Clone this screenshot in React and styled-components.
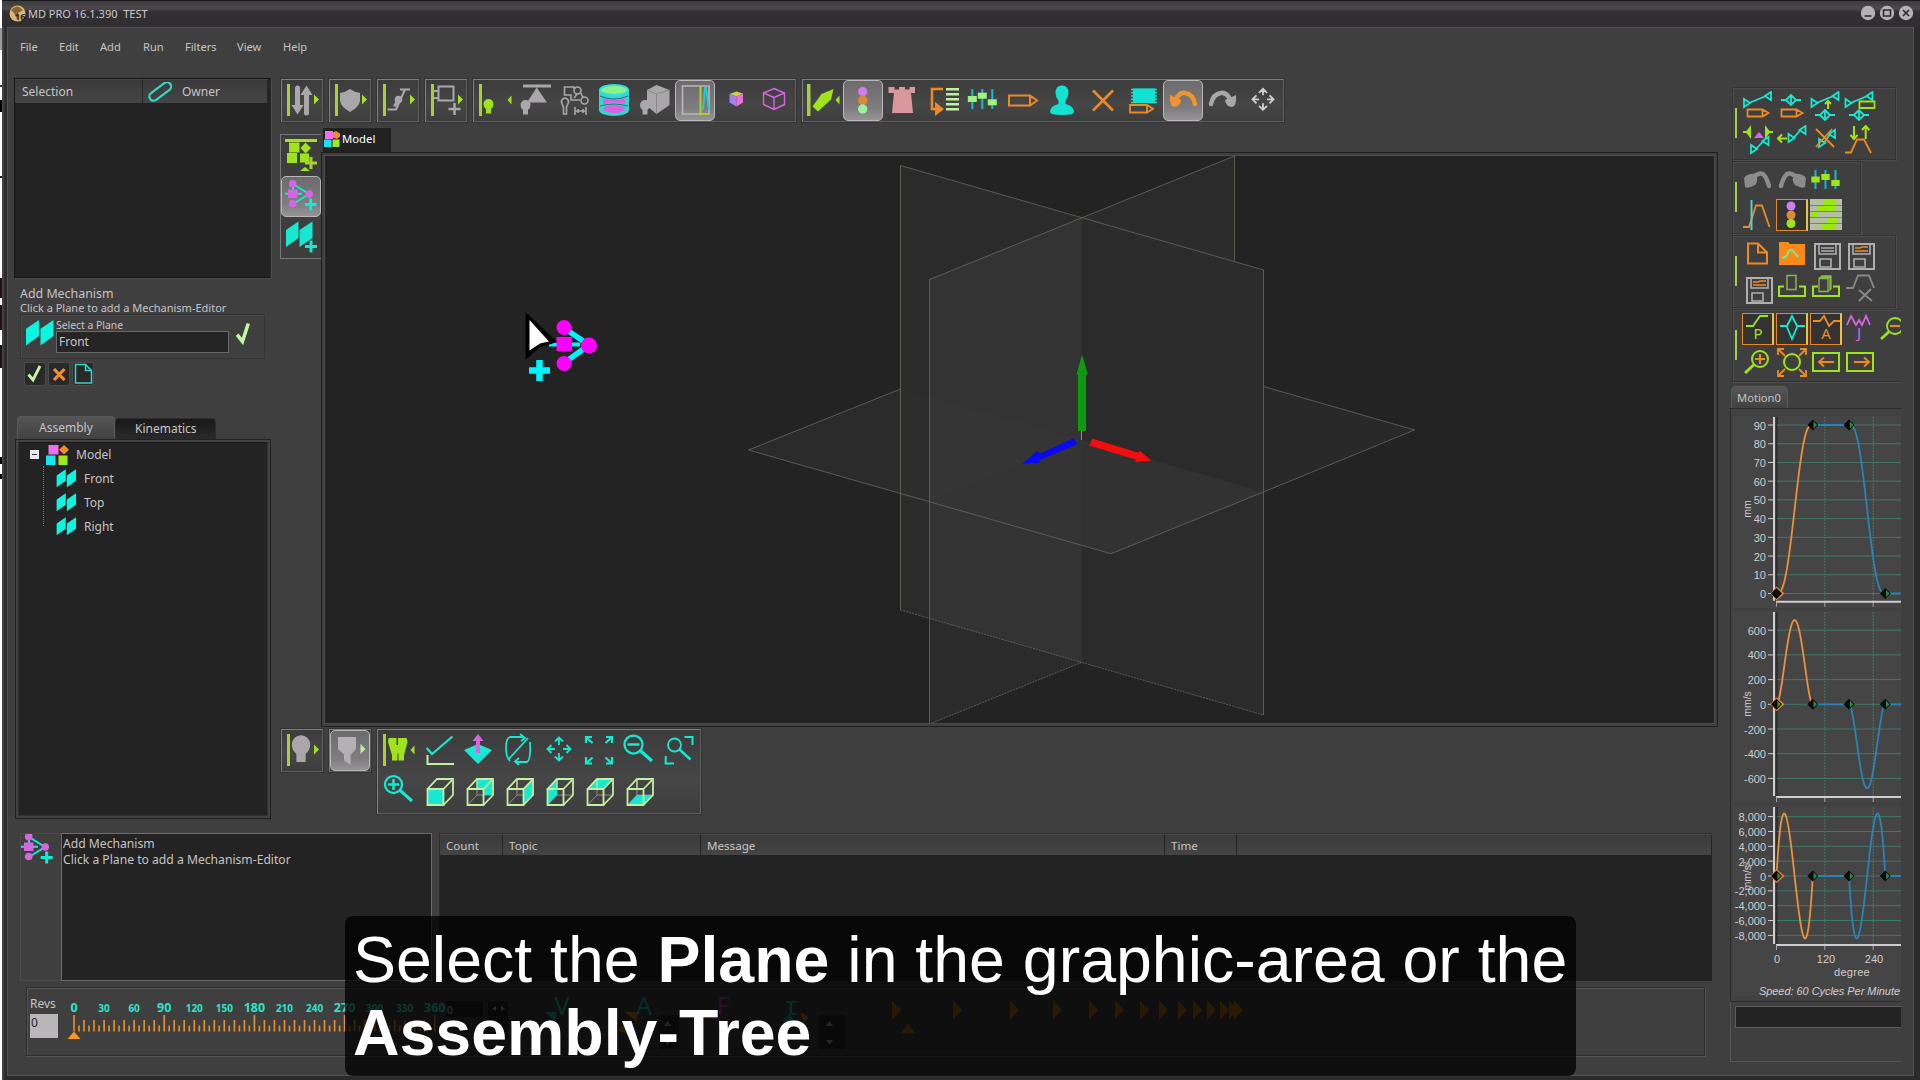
import React from "react";
import styled, { createGlobalStyle, css } from "styled-components";

const C = {
  lime: "#9fe31a",
  bar: "#a6cf3c",
  cyan: "#17e8d2",
  aqua: "#0cf5e0",
  purple: "#d864e4",
  orange: "#ee8a24",
  grey: "#a9a7a9",
  pale: "#c3efa2",
  text: "#c6c4c6",
  panel: "#3f3f3f",
  well: "#232323",
};

const GlobalStyle = createGlobalStyle`
  *, *::before, *::after { box-sizing: border-box; }
  body { margin: 0; background: #2d2c2d; overflow: hidden; }
  svg { display: block; }
`;

/* ---------- window shell ---------- */

const Screen = styled.div`
  position: relative;
  width: 1920px;
  height: 1080px;
  overflow: hidden;
  padding-left: 2px;
  background: linear-gradient(#fff 0 28px, #999 28px 50px, #fff 50px 85px, #333 85px 87px, #fff 87px 100px, #000 100px 112px, #fff 112px 176px, #222 176px 178px, #fff 178px 278px, #211 278px 298px, #fff 298px 305px, #211 305px 330px, #fff 330px 345px, #211 345px 368px, #fff 368px 457px, #000 457px 464px, #fff 464px 474px, #000 474px 479px, #fff 479px);
  font-family: "Noto Sans", "DejaVu Sans", sans-serif;
  font-size: 12px;
  color: ${C.text};
`;

const Window = styled.div`
  height: 1080px;
  padding: 0 6px 4px 5px;
  background: linear-gradient(90deg, #464546 0 1px, #2c2b2c 3px);
`;

const TitleBar = styled.header`
  display: flex;
  align-items: center;
  height: 27px;
  margin: 0 -6px 0 -5px;
  padding: 0 6px 2px 7px;
  border-top: 1px solid #1c1b1c;
  background: linear-gradient(#3d3b3d 0, #4a484a 30%, #312f31 42%, #302e30 100%);
`;

const Title = styled.span`
  margin-left: 2px;
  font-size: 11px;
  white-space: pre;
  color: #cbc9cb;
`;

const WinButtons = styled.div`
  display: flex;
  gap: 3px;
  margin-left: auto;
`;

const Frame = styled.div`
  height: 1049px;
  border: 1px solid #545354;
  background: ${C.panel};
`;

const MenuBar = styled.nav`
  display: flex;
  height: 50px;
  padding-left: 12px;
`;

const MenuItem = styled.span`
  width: ${(p) => p.$w}px;
  height: 38px;
  line-height: 38px;
  font-size: 11.1px;
`;

const Work = styled.div`
  display: flex;
`;

const Main = styled.main`
  width: 1722px;
`;

const Upper = styled.section`
  display: flex;
  height: 755px;
  padding-left: 6px;
`;

/* ---------- left column ---------- */

const LeftCol = styled.aside`
  display: flex;
  flex-direction: column;
  width: 257px;
  margin-right: 9px;
`;

const ListPanel = styled.div`
  height: 200px;
  border: 1px solid #161616;
  border-right-color: #2a2a2a;
  box-shadow: 1px 1px 0 #4b4b4b;
  background: ${C.well};
`;

const HeadRow = styled.div`
  display: flex;
  height: 24px;
  margin-right: 2px;
`;

const HeadCell = styled.div`
  display: flex;
  align-items: center;
  width: ${(p) => p.$w};
  height: 100%;
  padding-left: ${(p) => p.$pad || 6}px;
  gap: 10px;
  font-size: ${(p) => p.$size || 12}px;
  border-right: 1px solid #262626;
  border-top: 1px solid #4b4a4b;
  background: linear-gradient(#3a3a3a, #464546);
`;

const Prompt = styled.div`
  padding: 7px 0 0 6px;
`;

const PromptTitle = styled.div`
  height: 16px;
  line-height: 18px;
  font-size: 12.4px;
`;

const PromptHint = styled.div`
  height: 13px;
  line-height: 14px;
  font-size: 11px;
`;

const PickBox = styled.div`
  display: flex;
  width: 245px;
  height: 45px;
  padding: 4px 0 0 5px;
  border: 1px solid #363536;
  box-shadow: inset 1px 1px 0 #4a494a;
`;

const PickField = styled.div`
  width: 173px;
  margin: 0 6px 0 2px;
`;

const PickLabel = styled.div`
  height: 12px;
  line-height: 12px;
  font-size: 10.4px;
`;

const PickInput = styled.div`
  height: 22px;
  padding-left: 2px;
  line-height: 19px;
  border: 1px solid #6b6a6b;
  background: #262526;
`;

const Actions = styled.div`
  display: flex;
  gap: 4px;
  padding: 4px 0 0 5px;
`;

const ActionButton = styled.div`
  width: 20px;
  height: 22px;
  border-radius: 2px;
  background: #292929;
  box-shadow: 0 0 0 1px #4a4a4a;
`;

const Tabs = styled.div`
  display: flex;
  align-items: flex-end;
  height: 23px;
  margin: 31px 0 0 3px;
`;

const Tab = styled.div`
  width: ${(p) => p.$w}px;
  height: ${(p) => (p.$on ? 23 : 21)}px;
  padding-left: ${(p) => p.$pad}px;
  line-height: ${(p) => (p.$on ? 22 : 20)}px;
  border-radius: 4px 4px 0 0;
  border: 1px solid ${(p) => (p.$on ? "#5a595a" : "#2d2d2d")};
  border-bottom: 0;
  background: ${(p) => (p.$on ? "linear-gradient(#575657, #424142)" : "linear-gradient(#191919, #2a2a2a)")};
`;

const TreeBox = styled.div`
  width: 256px;
  height: 380px;
  padding: 2px;
  margin-left: 1px;
  border: 1px solid #222;
  background: #434243;
`;

const Tree = styled.div`
  height: 374px;
  width: 250px;
  padding: 0 0 0 11px;
  background: ${C.well};
  border: 1px solid #303030;
  border-top-color: #1b1b1b;
`;

const TreeRow = styled.div`
  display: flex;
  align-items: center;
  height: 24px;
  gap: 7px;
`;

const TreeRoot = styled(TreeRow)`
  height: 23px;
`;

const TreeKids = styled.div`
  margin-left: 13px;
  padding-left: 12px;
  height: 60px;
  border-left: 1px dotted #777;
`;

/* ---------- toolbars ---------- */

const Center = styled.section`
  width: 1440px;
`;

const ToolRow = styled.div`
  display: flex;
  gap: 6px;
  height: ${(p) => p.$h}px;
  padding: 1px 0 0 1px;
`;

const bevel = css`
  border: 1px solid #5f5e5f;
  border-top-color: #807f80;
  border-left-color: #807f80;
  box-shadow: 0 0 0 1px #353435;
  background: linear-gradient(#3d3c3d, #474647 60%, #3e3d3e);
`;

const ToolGroup = styled.div`
  display: flex;
  flex-wrap: wrap;
  align-content: flex-start;
  flex: none;
  width: ${(p) => p.$n * 40 + 2 + (p.$slack || 0)}px;
  height: ${(p) => (p.$rows || 1) * 41 + (p.$rows > 1 ? 3 : 2)}px;
  padding-left: ${(p) => p.$lead || 0}px;
  ${bevel}
`;

const ToolButton = styled.div`
  width: 40px;
  height: 41px;
  border-radius: 5px;
  ${(p) =>
    p.$on &&
    css`
      border: 1px solid #b9b8b9;
      background: linear-gradient(#6c6a6c, #7f7d7f 70%, #959395);
      svg { margin: -1px; }
    `}
`;

const Stage = styled.div`
  display: flex;
  height: 600px;
`;

const SideTools = styled.div`
  width: 41px;
  height: 125px;
  margin-top: 6px;
  border: 1px solid #777;
  border-right: 0;
  background: #3f3e3f;
`;

const ViewCol = styled.div`
  width: 1397px;
`;

const ModelTab = styled.div`
  display: flex;
  align-items: center;
  width: 68px;
  height: 24px;
  margin-left: 2px;
  padding: 0 0 3px 1px;
  gap: 2px;
  font-size: 11.3px;
  color: #fff;
  background: #222;
`;

const ViewFrame = styled.div`
  height: 575px;
  padding: 2px;
  border: 1px solid #202020;
  background: #403f40;
`;

const Viewport = styled.div`
  height: 569px;
  border: 1px solid #4d4c4d;
  background: ${C.well};
`;

/* ---------- bottom area ---------- */

const Messages = styled.section`
  display: flex;
  height: 148px;
  padding-left: 12px;
`;

const MsgIcon = styled.div`
  width: 41px;
  border: 1px solid #4c4b4c;
  border-right: 0;
`;

const MsgBox = styled.div`
  width: 371px;
  padding: 2px 0 0 1px;
  border: 1px solid #6d6c6d;
  font-size: 12.150px;
  line-height: 16px;
  background: ${C.well};
`;

const LogTable = styled.div`
  width: 1273px;
  margin-left: 7px;
  border: 1px solid #2d2d2d;
  border-width: 1px 0 0 1px;
  background: ${C.well};
`;

const LogHead = styled.div`
  display: flex;
  height: 21px;
`;

const Timeline = styled.section`
  display: flex;
  width: 1679px;
  height: 69px;
  margin: 6px 0 0 18px;
  padding: 6px 0 0 3px;
  border: 1px solid #2f2e2f;
  box-shadow: inset 1px 1px 0 #555455, 1px 1px 0 #555455;
`;

const Revs = styled.div`
  width: 28px;
  line-height: 20px;
  font-size: 12px;
`;

const RevsField = styled.div`
  height: 24px;
  line-height: 18px;
  padding-left: 1px;
  color: #222;
  background: #b9b7ba;
`;

/* ---------- right dock ---------- */

const Dock = styled.aside`
  width: 171px;
  height: 995px;
  overflow: hidden;
  padding-top: 9px;
`;

const DockGroup = styled.div`
  display: flex;
  width: ${(p) => p.$w}px;
  height: 73px;
  margin: 0 0 1px 2px;
  padding: 3px 0 0 2px;
  border: 1px solid #343334;
  box-shadow: inset 1px 1px 0 #4d4c4d, 1px 1px 0 #4d4c4d;
`;

const Grip = styled.div`
  width: 2px;
  height: 30px;
  margin: 17px 5px 0 0;
  background: ${C.bar};
`;

const DockGrid = styled.div`
  display: grid;
  grid-template-columns: repeat(${(p) => p.$cols}, 32px);
  grid-auto-rows: 32px;
  gap: 2px;
`;

const DockButton = styled.div`
  width: 32px;
  height: 32px;
  ${(p) =>
    p.$on &&
    css`
      border: 1px solid #e8872a;
      border-right: 2px solid #f0c040;
      background: #343334;
      svg { margin: -1px; }
    `}
`;

const MotionTab = styled.div`
  width: 57px;
  height: 22px;
  margin: 4px 0 0 1px;
  padding-left: 5px;
  line-height: 21px;
  font-size: 11.2px;
  border: 1px solid #5a595a;
  border-bottom: 0;
  border-radius: 5px 5px 0 0;
  background: linear-gradient(#565556, #434243);
`;

const ChartPanel = styled.div`
  height: 594px;
  padding-top: 1px;
  border-left: 1px solid #2b2b2b;
  border-top: 1px solid #2b2b2b;
  border-bottom: 1px solid #2b2b2b;
  background: #424142;
`;

const DockFoot = styled.div`
  height: 60px;
  padding: 4px 0 0 4px;
  border-left: 1px solid #565556;
  border-bottom: 1px solid #565556;
`;

const DockField = styled.div`
  height: 22px;
  border: 1px solid #5e5d5e;
  border-right: 0;
  background: #252425;
`;

const Caption = styled.div`
  position: absolute;
  left: 345px;
  top: 916px;
  width: 1231px;
  height: 160px;
  padding: 8px;
  border-radius: 8px;
  background: rgba(0, 0, 0, 0.76);
  color: #fff;
  font-family: "Liberation Sans", Arial, sans-serif;
  font-size: 64.450px;
  line-height: 72.500px;
  white-space: nowrap;
`;

/* ---------- icon drawing helpers ---------- */

const Ico = ({ w = 40, h = 40, vb, children }) => (
  <svg width={w} height={h} viewBox={vb || `0 0 ${w} ${h}`} fill="none">{children}</svg>
);
const L = ({ d, c = C.cyan, w = 2, ...r }) => <path d={d} stroke={c} strokeWidth={w} {...r} />;
const F = ({ d, c = C.cyan, ...r }) => <path d={d} fill={c} {...r} />;
const Bar = () => <rect x="5" y="4" width="3" height="32" fill={C.bar} />;
const Next = ({ c = C.lime }) => <F c={c} d="M32 14.5l5 5-5 5z" />;
const Prev = () => <F c={C.lime} d="M36.5 15.500l-4 4.500 4 4.500z" />;
const Bulb = ({ x, y, c, s = 1 }) => (
  <F c={c} d={`M${x - 5 * s} ${y}a${5 * s} ${5 * s} 0 0 1 ${10 * s} 0q0 ${3 * s}-${2.5 * s} ${5 * s}v${4.5 * s}h-${5 * s}v-${4.5 * s}q-${2.5 * s}-${2 * s}-${2.5 * s}-${5 * s}z`} />
);
const Plus = ({ x, y, r = 6, w = 3, c = C.cyan }) => <L c={c} w={w} d={`M${x - r} ${y}h${2 * r}M${x} ${y - r}v${2 * r}`} />;
const FourWay = ({ x, y, r, c }) => (
  <L c={c} w={1.8} d={[[0, -1], [0, 1], [-1, 0], [1, 0]].map(([a, b]) => {
    const tx = x + a * r, ty = y + b * r, k = 4;
    return `M${x + a * 4} ${y + b * 4}L${tx} ${ty}M${tx - a * k + b * k} ${ty - b * k + a * k}L${tx} ${ty}L${tx - a * k - b * k} ${ty - b * k - a * k}`;
  }).join("")} />
);
const Pencil = ({ x, y, w, h, tip = 7, sw = 2 }) => (
  <L c={C.orange} w={sw} d={`M${x} ${y}h${w}l${tip} ${h / 2}l-${tip} ${h / 2}h-${w}zM${x + w} ${y}v${h}`} />
);
const Mechanism = () => (
  <>
    <L w={2} d="M12 8L28 18L12 28M4 17.700H21M12 8V18" />
    <g fill={C.purple}>
      <circle cx="11.700" cy="7.700" r="3.800" /><circle cx="28.300" cy="18" r="3.700" /><circle cx="11.700" cy="27.500" r="3.800" />
      <rect x="7" y="13.500" width="9.500" height="8.500" />
    </g>
    <Plus x={29.7} y={28.5} />
  </>
);
const Planes = ({ w = 27, h = 26 }) => (
  <svg width={w} height={h} viewBox="0 0 27 26" fill={C.aqua}>
    <path d="M0 9L12.500 0.500V16L0 25zM14 9L26.500 0.500V16L14 25z" />
  </svg>
);
const ModelGlyph = ({ w, h }) => (
  <svg width={w} height={h} viewBox="0 0 23 20">
    <rect x="2.500" y="0" width="10" height="9.500" fill="#ef6df0" />
    <path d="M18 0l5 4.800-5 4.800-5-4.800z" fill="#f58a26" />
    <rect x="0" y="10.500" width="9.500" height="9.500" fill="#17e6f2" />
    <rect x="12.500" y="10.500" width="9" height="9.500" fill="#a0e81c" />
  </svg>
);
const TabGlyph = () => (
  <svg width="16" height="16" viewBox="0 0 16 16">
    <rect x="1" y="0" width="8" height="8" fill="#ef6df0" />
    <path d="M9 1.500l3-1.500 4 2.500v3l-3 2.500-4-1.500z" fill="#f58a26" />
    <rect x="0" y="8.500" width="7.500" height="7.500" fill="#17e6f2" />
    <rect x="8.500" y="8.500" width="7" height="7.500" fill="#a0e81c" />
  </svg>
);
const Sliders = ({ xs, ys, y1, y2, kw }) => (
  <>
    {xs.map((x, i) => (
      <g key={x}>
        <rect x={x - 1} y={y1} width="2" height={y2 - y1} fill="#19b8d0" />
        <rect x={x - kw / 2} y={ys[i] - 3} width={kw} height="6" fill={kw > 8.5 ? "#a0f082" : C.lime} />
      </g>
    ))}
  </>
);
const Dots = ({ x, ys, r }) => (
  <>
    <circle cx={x} cy={ys[0]} r={r} fill="#cf7cf0" />
    <circle cx={x} cy={ys[1]} r={r} fill="#d88a35" />
    <circle cx={x} cy={ys[2]} r={r} fill={r > 4.6 ? "#9cf09a" : C.lime} />
  </>
);
const Undo = ({ c, flip, s = 40 }) => (
  <g transform={flip ? `translate(${s},0) scale(-1,1)` : undefined}>
    <L c={c} w={4.5} strokeLinecap="round" d={s === 40 ? "M13 19Q17 12 22 13Q30 14 32 24" : "M10 14Q16 7 21 9Q25 13 27 21"} />
    <F c={c} d={s === 40 ? "M7 15L18 20Q17 27 11 27Q6 26 7 15z" : "M2 13Q6 8 14 9Q17 16 13 20Q6 24 3 22z"} />
  </g>
);

const CubeFace = ({ face }) => {
  const faces = {
    front: "M9.500 18h16v16h-16z",
    back: "M19 8h16v16h-9.500v-6H19z",
    right: "M25.500 18L35 8V24L25.500 34z",
    left: "M9.500 18L19 8V24L9.500 34z",
    top: "M9.500 18L19 8H35L25.500 18z",
    bottom: "M9.500 34L19 24H35L25.500 34z",
  };
  return (
    <Ico>
      {face !== "front" && <L c="#8b8a8b" w={1} d="M19 24H35M19 8V24L9.500 34" />}
      <F d={faces[face]} />
      <L c={C.pale} w={1.8} d="M9.500 18h16v16h-16zM9.500 18L19 8H35V24L25.500 34M25.500 18L35 8" />
      {face !== "front" && <L c={C.pale} w={1.2} d="M19 8V18" />}
    </Ico>
  );
};

const Lens = ({ x, y, r, tx, ty, sign, c = C.cyan, sc = c, w = 2.5 }) => {
  const a = Math.atan2(ty - y, tx - x);
  return (
    <>
      <circle cx={x} cy={y} r={r} stroke={c} strokeWidth={w * 0.9} />
      <L c={c} w={w * 1.3} d={`M${x + r * Math.cos(a)} ${y + r * Math.sin(a)}L${tx} ${ty}`} />
      {sign && <L c={sc} w={w} d={`M${x - r + 3} ${y}h${2 * r - 6}${sign === "+" ? `M${x} ${y - r + 3}v${2 * r - 6}` : ""}`} />}
    </>
  );
};

/* ---------- toolbar icons ---------- */

const quick = [
  <><Bar /><L c={C.grey} w={5} d="M15.500 8V28M24.500 33V14" strokeLinecap="round" /><F c={C.grey} d="M9.500 25h12l-6 9.500zM18.500 15h12l-6-9.500z" /><Next /></>,
  <><Bar /><F c={C.grey} d="M10 13Q15 12.500 20 9Q25 12.500 30 13V21Q29 27 20 32Q11 27 10 21z" /><Next /></>,
  <><Bar /><L c={C.grey} w={2} d="M9.500 29.500H18L27 9.500M22 9.500H32" /><circle cx="20.500" cy="19.500" r="3.800" fill={C.grey} /><F c={C.grey} d="M15 26l5-9 3 2-5 8z" /><Next /></>,
  <><Bar /><L c={C.grey} w={2} d="M12.500 6.500h15v14h-15zM8 11h5M8 18h5" /><Plus x={28.5} y={29} r={6} w={2.5} c={C.grey} /><Next /></>,
];

const display = [
  [<><rect x="4" y="4" width="3" height="32" fill={C.bar} /><Bulb x={13.5} y={24} c={C.lime} /><Prev /></>],
  [<><F c={C.grey} d="M8 4.500h28v3H8zM21.700 7.500L32 22.500H12z" /><Bulb x={10.5} y={25} c={C.grey} /></>],
  [<><L c={C.grey} w={1.6} d="M19 9V7H9.500V15H16V20H25M7 23.500a3.500 3.500 0 1 1 6 0l-1.500 4v6.500h-3v-6.500zM20 27v8M31 27v8M20 31h11M23 29v4M28 29v4M22 14L19 18M25.500 12.500L28 17.500" /><circle cx="22.500" cy="10.500" r="3.500" stroke={C.grey} strokeWidth="1.600" /><circle cx="29.500" cy="20.500" r="3.500" stroke={C.grey} strokeWidth="1.600" /></>],
  [<><path d="M4 10v20a15 6 0 0 0 30 0V10z" fill="#35d6cf" /><ellipse cx="19" cy="10" rx="14" ry="5" fill="#8cf08c" stroke="#2fe2e2" strokeWidth="2" /><path d="M8 18q11 3 22 0v6q-11 -3-22 0z" fill={C.purple} /><ellipse cx="19" cy="29" rx="11" ry="4" fill={C.purple} /><L c="#235c66" w={0.8} d="M5 16q14 6 28 0M5 26q14 -4 28 0" /></>],
  [<><F c={C.grey} d="M21.500 5L34.500 10V25L21.500 34L12 26V10z" /><L c="#8a898a" w={1} d="M12 10L21.500 14L34.500 10M21.500 14V34" /><Bulb x={10} y={25} c={C.grey} /></>],
  [<><L c="#b9b8b9" w={1.6} d="M7.500 6h26.500v28h-26.500z" /><L c="#b5cc30" w={2} d="M25.500 6v28h9" /><L c="#25cfc9" w={1.8} d="M28 30l2-22h1l3 22" /></>, true],
  [<><F c="#c5d63a" d="M14.500 14l7-2.500 6.500 2-6.500 3z" /><F c="#a77df0" d="M14.500 14l7 2.500v10l-7-4z" /><F c="#e872d8" d="M21.500 16.500l6.500-3v9l-6.500 4z" /></>],
  [<L c={C.purple} w={1.4} d="M19 8.500L29.500 13V24.500L19 29.500L8.500 24.500V13zM8.500 13L19 17.500L29.500 13M19 17.500V29.500" />],
];

const edit = [
  [<><rect x="4" y="4" width="3.500" height="32" fill={C.bar} /><F c={C.lime} d="M9.500 26.500L18.500 14L30.500 9L28 19.500L15 31.500z" /><Prev /></>],
  [<Dots x={19.7} ys={[11.7, 20.3, 29]} r={4.7} />, true],
  [<F c="#d9989d" d="M5.500 7h6v2.500h4.500V7h6v2.500h4.500V7h5.500v6h-4l2 20h-21l2-20h-5.500z" />],
  [<><L c={C.orange} w={2.5} d="M20 9H9V29H14" /><F c={C.orange} d="M12 22L21 29L12 36z" /><L c={C.pale} w={2.6} d="M23 9.300h13M23 14.300h13M23 19.300h13M23 24.300h13M23 29.300h13" /></>],
  [<Sliders xs={[9.3, 19.3, 29.3]} ys={[19, 15.7, 22.3]} y1={9} y2={29} kw={9} />],
  [<Pencil x={6} y={15.5} w={21} h={10} />],
  [<F c="#12e3d0" d="M19 5.500q6.500 0 6.500 7.500q0 4-3 7.500v3.500q8.500 2 8.500 8q0 3-12 3t-12-3q0-6 8.500-8v-3.500q-3-3.500-3-7.500q0-7.500 6.500-7.500z" />],
  [<L c={C.orange} w={2.5} d="M10 10.500L30 30.500M30 10.500L10 30.500" />],
  [<><rect x="10" y="8.500" width="22" height="14.500" fill="#12e3d0" /><L c="#12e3d0" w={1.6} d="M8 9.500h26M8 12.800h26M8 16h26M8 19.300h26M8 22.500h26" /><Pencil x={7} y={25} w={17} h={7.5} tip={6} sw={1.8} /></>],
  [<Undo c="#ee9430" />, true],
  [<Undo c={C.grey} flip />],
  [<FourWay x={20} y={19.3} r={10.5} c="#d0cfd0" />],
];

const view = [
  <><Bar /><F c={C.lime} d="M10.500 8h8v7h1.500v-7h8.500l1 4-3.500 13v5.500h-5.500v-7h-1v7h-5.500v-5.500l-4-13z" /><Prev /></>,
  <><L w={2.2} d="M8.700 18L14 24L34.500 6.500" /><L c={C.pale} w={2} d="M9.500 25V34H36" /></>,
  <><F d="M6 20L20 14L34 20L20 34z" /><F c={C.purple} d="M18 23V11h-3.500L20 4l5.500 7H22v12z" /></>,
  <><L w={1.8} d="M12 7Q8 8 8 18Q8 27 12 31M12 7H26M22 4L27 8L23 11M32 12Q33 30 29 32H17M21 28L17 31.500L21 35M30 8L10 30" /></>,
  <FourWay x={21} y={19} r={11.5} c={C.cyan} />,
  <L w={2.2} d="M8 13V7h6M8 7l6.500 6M28 7h6v6M34 7l-6.500 6M8 27v6.500h6M8 33.500l6.500-6M28 33.500h6V27M34 33.500l-6.500-6" />,
  <Lens x={15.5} y={14.5} r={9} tx={34} ty={31} sign="-" />,
  <><Lens x={16.5} y={15} r={6.5} tx={32.5} ty={29.5} w={2} /><L w={2} d="M26.500 7H34.500V15M7.700 26V33.500H16" /></>,
  <Lens x={15.5} y={13.5} r={8.5} tx={34} ty={30} sign="+" />,
];

/* ---------- dock icons (32 px cells) ---------- */

const Seg = ({ x1, y1, x2, y2 }) => (
  <L w={1.8} d={`M${x1 + 5} ${y1 - 2}L${x2 - 5} ${y2 + 2}M${x1} ${y1 - 6}v8l6-4zM${x2} ${y2 - 2}v8l-6-4z`} />
);
const Dia = ({ x, y, w = 10 }) => <L w={1.8} d={`M${x - w} ${y}h${w - 5}l5-5 5 5-5 5-5-5M${x + 5} ${y}h${w - 5}M${x} ${y - 3}v6`} />;
const Floppy = ({ c }) => (
  <>
    <L c="#b0aeb0" w={2} d="M5 5h25v25h-25z" />
    <L c="#b0aeb0" w={1.6} d="M9 5v10h17V5M10 20h11v8h-11z" />
    <L c={c} w={1.6} d={c === C.orange ? "M11 9h5l2-1h6M11 12h13" : "M11 9h13M11 12h13"} />
  </>
);
const Letter = ({ x, y, c, children }) => (
  <text x={x} y={y} fill={c} fontFamily="Noto Sans, sans-serif" fontSize="15" textAnchor="middle">{children}</text>
);

const dock = [
  { w: 164, cols: 4, items: [
    [<><Seg x1={2} y1={14} x2={29} y2={3} /><Pencil x={5.5} y={18.5} w={15} h={7} tip={6} sw={1.8} /></>],
    [<><Dia x={15} y={9} /><Pencil x={5.5} y={18.5} w={15} h={7} tip={6} sw={1.8} /></>],
    [<><Seg x1={1.5} y1={14} x2={28.5} y2={3} /><L c={C.lime} w={2} d="M18 18v-8M15 13l3-3 3 3" /><Dia x={15} y={24} /></>],
    [<><Seg x1={1.5} y1={14} x2={28.5} y2={3} /><L c={C.lime} w={1.8} d="M15.500 10.500h15v6.500h-15z" /><Dia x={15} y={24} /></>],
    [<><L c={C.lime} w={2} d="M1 7h7M23 7h8M8 3v8l-3-4zM24 3v8l3-4z" /><F c={C.purple} d="M12 13l5-6 5 6z" /><Seg x1={9} y1={26} x2={26.5} y2={14} /></>],
    [<><L c={C.lime} w={2} d="M2 13.500h9M6 9.500l-4 4 4 4" /><Seg x1={12.5} y1={15} x2={29.5} y2={3} /></>],
    [<><Seg x1={9} y1={20} x2={25} y2={7} /><L c={C.orange} w={1.8} d="M6 4L24 22M22 4L6 22" /></>],
    [<><L c={C.lime} w={2} d="M10 1v13M6.500 10l3.500 4 3.500-4M21.700 14V1M18 5l3.700-4 3.700 4" /><L c={C.orange} w={1.8} d="M1 27.500H7L13 14.500H20L27 28" /></>],
  ] },
  { w: 129, cols: 3, items: [
    [<Undo c="#8d8c8d" s={32} />],
    [<Undo c="#8d8c8d" s={32} flip />],
    [<Sliders xs={[5.5, 15.5, 25.5]} ys={[14.5, 12, 18]} y1={5} y2={24} kw={8.4} />],
    [<><L c={C.orange} w={1.8} d="M1 28H7L14 6.500H20L27.500 28" /><L c="#55d0c8" w={2} d="M9.500 1v30" /></>],
    [<Dots x={15} ys={[7, 16, 24.5]} r={4.5} />, true],
    [<><rect width="32" height="31" fill="#b5bfa6" /><g fill="#9be80c"><rect x="14" width="11" height="6" /><rect x="8" y="6" width="17" height="6" /><rect x="1" y="13" width="7" height="5" /><rect x="18" y="19" width="10" height="6" /><rect x="12" y="25" width="14" height="6" /></g><L c="#5f8030" w={0.8} d="M0 6.500h32M0 12.500h32M0 18.500h32M0 24.500h32" /></>],
  ] },
  { w: 164, cols: 4, items: [
    [<L c={C.orange} w={2} d="M6 4.500h10l9 9v11H6zM16 4.500v9h9" />],
    [<><F c="#f98a16" d="M3 3h9l2 2h15v21H3z" /><L c="#7fe0a0" w={2} d="M6 19q4 0 6-5t5-2 5 6" /></>],
    [<Floppy c="#b0aeb0" />],
    [<Floppy c={C.orange} />],
    [<Floppy c={C.orange} />],
    [<><L c={C.lime} w={2} d="M8 13.500H3V23H29V13.500H23" /><L c="#88b84a" w={1.5} d="M11 2.500h9v14h-9z" /></>],
    [<><L c={C.lime} w={2} d="M8 13.500H3V23H29V13.500H23" /><L c="#88b84a" w={1.3} d="M9 5.500h9v13h-9zM9 5.500l3-2.500h9v13l-3 2.500M18 5.500l3-2.500M11 4h9v13" /></>],
    [<L c="#8a898a" w={1.8} d="M2 15H9L14 2.500H25L30 15M15 17L28 28M27 16L15 28" />],
  ] },
  { w: 190, cols: 5, items: [
    [<><L c={C.lime} w={1.8} d="M4 13H11L18 3H26" /><Letter x={16} y={26} c={C.lime}>P</Letter></>, true],
    [<L c={C.cyan} w={1.8} d="M4 13H11L16 3L21 13H29M11 14L16 26L21 14" />, true],
    [<><L c={C.orange} w={1.8} d="M3 8H10L14 3L19 13L24 8H30" /><Letter x={16} y={26} c={C.orange}>A</Letter></>, true],
    [<><L c={C.purple} w={1.8} d="M3 12L7 3L12 12L15 7L18 12L22 3L26 12" /><Letter x={15} y={25} c={C.purple}>J</Letter></>],
    [<Lens x={17} y={13} r={8} tx={3} ty={26} sign="-" c={C.lime} sc={C.orange} w={2} />],
    [<Lens x={18} y={12} r={8} tx={3} ty={26} sign="+" c={C.lime} sc={C.orange} w={2.2} />],
    [<><circle cx="16" cy="15" r="8" stroke={C.lime} strokeWidth="2" /><L c={C.orange} w={1.8} d="M9 9L2 2M2 8V2h6M23 9l7-7M24 2h6v6M9 22l-7 7M2 23v6h6M23 22l7 7M30 23v6h-6" /></>],
    [<><L c={C.lime} w={2} d="M3 6h26v18H3z" /><L c={C.orange} w={2} d="M24 15H9M14 10.500L9 15l5 4.500" /></>],
    [<><L c={C.lime} w={2} d="M3 6h26v18H3z" /><L c={C.orange} w={2} d="M10 15H25M20 10.500L25 15l-5 4.500" /></>],
  ] },
];

/* ---------- charts ---------- */

const X0 = 1776.5;
const xAt = (deg) => X0 + deg * 0.4028;

const samples = (from, y0, amp, fn) => {
  let d = "";
  for (let i = 0; i <= 40; i++) {
    const t = i / 40;
    d += `${i ? "L" : "M"}${(xAt(from + t * 90)).toFixed(2)} ${(y0 - amp * fn(t)).toFixed(2)}`;
  }
  return d;
};
const rise = (t) => t * t * t * (10 - 15 * t + 6 * t * t);
const vel = (t) => 16 * t * t * (1 - t) * (1 - t);
const acc = (t) => (t * (1 - t) * (1 - 2 * t)) / 0.0962;

const Diamond = ({ x, y, hot }) => (
  <g>
    {hot && <path d={`M${x} ${y - 7}l8 7-8 7-6-7z`} fill="#e08530" />}
    <path d={`M${x} ${y - 5.5}l5.500 5.500-5.500 5.500-5.500-5.500z`} fill="#0b0b0b" />
    {hot !== "solid" && <path d={`M${x + 0.8} ${y - 3.5}l3.500 3.500-3.500 3.500z`} fill="#2f8a40" />}
  </g>
);

const Chart = ({ top, height, axis, ticks, unit, unitY, unitX = 1748, orange, blue, ys, solid, children }) => (
  <svg width="170" height={height} viewBox={`1731 ${top} 170 ${height}`} fontFamily="Liberation Sans, Arial, sans-serif" fontSize="11" fill="#cfcdcf">
    <rect x="1733" y={axis[0] - 1} width="168" height={axis[2]} fill="#464546" />
    <path d={`M1777 ${axis[0]}V${axis[1]}`} stroke="#2a2a2a" strokeWidth="1.500" />
    {ticks.map(([label, y]) => (
      <g key={label}>
        <path d={`M1777 ${y}H1901`} stroke="#3f7a68" strokeWidth="1" />
        <path d={`M1768 ${y}H1774`} stroke="#cfcdcf" />
        <text x="1766" y={y + 4.5} textAnchor="end">{label}</text>
      </g>
    ))}
    {[120, 240].map((d) => (
      <g key={d}>
        <path d={`M${xAt(d)} ${axis[0]}V${axis[1]}`} stroke="#3f7a68" strokeWidth="1" strokeDasharray="2 1" />
        <path d={`M${xAt(d)} ${axis[1]}v5`} stroke="#a5a3a5" />
      </g>
    ))}
    <path d={`M1774 ${axis[0]}V${axis[1] - 1}M1776 ${axis[1]}H1901`} stroke="#d0ced0" strokeWidth="2" />
    <path d={`M1776.500 ${axis[1]}v5`} stroke="#a5a3a5" />
    <text textAnchor="middle" transform={`translate(${unitX + 3},${unitY}) rotate(-90)`} fontSize="10.500">{unit}</text>
    <g fill="none" strokeWidth="1.800">
      <path d={orange} stroke="#ec9138" />
      <path d={blue} stroke="#2a84b5" />
    </g>
    <Diamond x={xAt(0)} y={ys[0]} hot={solid ? "solid" : "half"} />
    <Diamond x={xAt(90)} y={ys[1]} />
    <Diamond x={xAt(180)} y={ys[2]} />
    <Diamond x={xAt(270)} y={ys[3]} />
    {children}
  </svg>
);

const dispTicks = [90, 80, 70, 60, 50, 40, 30, 20, 10, 0].map((v) => [String(v), 593.5 - v * 1.872]);
const velTicks = [600, 400, 200, 0, -200, -400, -600].map((v) => [String(v), 704.3 - v * 0.1235]);
const accTicks = [8000, 6000, 4000, 2000, 0, -2000, -4000, -6000, -8000].map((v) => [v.toLocaleString("en-US"), 876 - v * 0.00742]);

const Charts = () => (
  <ChartPanel>
    <Chart top={410} height={201} axis={[417, 601.7, 192]} ticks={dispTicks} unit="mm" unitY={509} solid
      orange={samples(0, 593.5, 168.5, rise)}
      blue={`M${xAt(90)} 425H${xAt(180)}${samples(180, 425, -168.5, rise).replace("M", "L")}H1901`}
      ys={[593.5, 425, 425, 593.5]} />
    <Chart top={611} height={195} axis={[612, 797, 191]} ticks={velTicks} unit="mm/s" unitY={704}
      orange={samples(0, 704.3, 84.3, vel)}
      blue={`M${xAt(90)} 704.300H${xAt(180)}${samples(180, 704.3, -84, vel).replace("M", "L")}H1901`}
      ys={[704.3, 704.3, 704.3, 704.3]} />
    <Chart top={806} height={195} axis={[807, 945, 190]} ticks={accTicks} unit="mm/s²" unitY={876}
      orange={samples(0, 876, 62.5, acc)}
      blue={`M${xAt(90)} 876H${xAt(180)}${samples(180, 876, -62.5, acc).replace("M", "L")}H1901`}
      ys={[876, 876, 876, 876]}>
      <g textAnchor="middle">
        <text x="1777" y="963">0</text>
        <text x="1826" y="963">120</text>
        <text x="1874" y="963">240</text>
        <text x="1852" y="976" letterSpacing="0.300">degree</text>
      </g>
      <text x="1900" y="994.500" textAnchor="end" fontStyle="italic" fontSize="10.900">Speed: 60 Cycles Per Minute</text>
    </Chart>
  </ChartPanel>
);

/* ---------- 3D scene ---------- */

const Scene = () => (
  <svg width="1389" height="567" viewBox="325 156 1389 567">
    <g fill="#fff" fillOpacity="0.040">
      <path d="M900.500 165.500L1263.500 270V715L900.500 610z" />
      <path d="M929.500 279.500L1081.500 217.700V662.800L929.500 724.500z" />
      <path d="M1081.500 217.700L1234.500 156V261.500z" />
      <path d="M900.500 389L748.500 450L900.500 493.500z" />
      <path d="M900.500 389L1081.500 439.700L929.500 501.500L900.500 493.500z" fillOpacity="0.012" />
      <path d="M1081.500 439.700L929.500 501.500L1081.500 545z" fillOpacity="0.008" />
      <path d="M1081.500 439.700V545L1111 553.700L1263.500 492z" fillOpacity="0.036" />
      <path d="M1263.500 386.500L1414.500 430L1263.500 492z" fillOpacity="0.032" />
    </g>
    <g fill="none" stroke="#6a665e" strokeWidth="1" strokeOpacity="0.800">
      <path d="M900.500 610V165.500L1263.500 270V715" />
      <path d="M929.500 724V279.500L1234.500 156V261" />
      <path d="M900.500 389L748.500 450L1111 553.700L1263.500 492L1414.500 430L1263.500 386.500" />
      <path d="M900.500 610L1263.500 715M929.500 724L1081.500 662.500" strokeDasharray="2 1" />
    </g>
    <path d="M1081.500 430V440" stroke="#7f9f7f" />
    <path d="M1078 431V374.500H1076.500L1082 354.500L1088 374.500H1086V431z" fill="#0e9a10" />
    <path d="M1074 438L1040 453.500L1037 451L1022 464L1039 463L1040 460L1077 444.500z" fill="#0a0af0" />
    <path d="M1092 438.500L1138 452.500L1140 451L1151.500 460.500L1135.500 462V459.500L1089.500 445.500z" fill="#f40d0d" />
    <g stroke="#00f4ff" strokeWidth="6">
      <path d="M564 328L589 345L564 363" fill="none" strokeWidth="5.500" />
      <path d="M549 344.500H580" strokeWidth="4" />
      <path d="M529 370.500H550M539.500 360V381" strokeWidth="6.500" />
    </g>
    <g fill="#ff00ff">
      <circle cx="564" cy="327.500" r="7.500" />
      <circle cx="589" cy="345.500" r="8" />
      <circle cx="564" cy="363.500" r="7.500" />
      <rect x="556.500" y="337" width="15.500" height="14" />
    </g>
    <path d="M525.500 312L557 342L548 345L540 347L525.500 360z" fill="#000" />
    <path d="M529.500 320L549 341.500L540 343.500L529.500 350.500z" fill="#fff" />
  </svg>
);

/* ---------- timeline ---------- */

const rx = (deg) => 74 + deg * 1.0022;

const Ruler = () => {
  const marks = [];
  for (let d = 0; d <= 360; d += 5) {
    const y = d % 90 === 0 ? 1015 : d % 10 === 0 ? 1020 : 1025.5;
    marks.push(`M${rx(d).toFixed(1)} ${y}V1031.500`);
  }
  const labels = Array.from({ length: 13 }, (_, i) => i * 30);
  return (
    <svg width="1480" height="58" viewBox="58 994 1480 58" fontFamily="Noto Sans, sans-serif" fontWeight="700">
      <path d={marks.join("")} stroke="#e08e30" strokeWidth="1.700" />
      <path d="M67.500 1039L74 1031.500L80.500 1039z" fill="#ff9416" />
      <g fill="#2fe3c8" textAnchor="middle">
        {labels.map((d) => (
          <text key={d} x={rx(d)} y={1012} fontSize={d % 90 === 0 ? 12.5 : 10}>{d}</text>
        ))}
      </g>
      <rect x="446" y="1001" width="37" height="16" fill="#262526" />
      <text x="447" y="1014" fontSize="10" fontWeight="400" fill="#c9c7c9">0</text>
      <rect x="488" y="1001" width="20" height="38" fill="#2a292a" />
      <path d="M496 1006l-4 2.500 4 2.500zM501 1006l4 2.500-4 2.500z" fill="#aaa" />
      <g fontWeight="400" fontSize="25" textAnchor="middle">
        <text x="562" y="1015" fill="#14c0a4">V</text>
        <text x="644" y="1015" fill="#14c0a4">A</text>
        <text x="723" y="1015" fill="#b03cb8">F</text>
        <text x="792" y="1015" fill="#14c0a4">τ</text>
      </g>
      <path d="M545 1012h11v10zM782 1022l8-9 4 8z" fill="#14b09a" />
      <path d="M625 1012h12v10zM618 1030l8-8v12zM800 1012l9 5-5 5z" fill="#c07818" />
      <path d="M705 1012h12v10z" fill="#9a30a0" />
      <rect x="659" y="1015" width="20" height="34" fill="#2a292a" />
      <rect x="819" y="1015" width="26" height="34" fill="#2a292a" />
      <path d="M664 1026l3.500-5 3.500 5zM664 1040l3.500 5 3.500-5zM826 1026l3.500-5 3.500 5zM826 1040l3.500 5 3.500-5z" fill="#999" />
      <path d={[892, 953, 1010, 1053, 1089, 1115, 1140, 1159, 1178, 1193, 1207, 1220, 1229, 1234].map((x) => `M${x} 1000.500l9 9.500-9 9.500z`).join("")} fill="#b06c14" />
      <path d="M901 1033L908 1024L915 1033z" fill="#b06c14" />
    </svg>
  );
};

const menus = [["File", 39], ["Edit", 41], ["Add", 43], ["Run", 42], ["Filters", 52], ["View", 46], ["Help", 40]];

const Tools = ({ items, n, lead, slack }) => (
  <ToolGroup $n={n} $lead={lead} $slack={slack}>
    {items.map(([icon, on], i) => (
      <ToolButton key={i} $on={on}><Ico>{icon}</Ico></ToolButton>
    ))}
  </ToolGroup>
);

const Check = ({ w, h }) => (
  <svg width={w} height={h} viewBox="0 0 16 22" fill="none"><path d="M2 13.500L7 20L12.500 3" stroke="#c4f5a4" strokeWidth="3.300" /></svg>
);

export default function App() {
  return (
    <Screen>
      <GlobalStyle />
      <Window>
        <TitleBar>
          <svg width="17" height="17" viewBox="0 0 17 17">
            <circle cx="8.500" cy="8.500" r="8" fill="#d8b676" />
            <path d="M2 5Q8 -2 14 5L9 8L8 14L5 8z" fill="#8d6134" />
            <text x="6" y="15" fontSize="9" fontWeight="700" fill="#1d1712" fontFamily="Noto Sans, sans-serif">16</text>
          </svg>
          <Title>{"MD PRO 16.1.390  TEST"}</Title>
          <WinButtons>
            {["M4.500 11h7", "M4.500 5h7v6h-7z", "M5 5l6 6M11 5l-6 6"].map((d) => (
              <svg key={d} width="16" height="16" viewBox="0 0 16 16" fill="none">
                <circle cx="8" cy="8" r="7.200" fill="#b4b2b4" />
                <path d={d} stroke="#2b2a2b" strokeWidth="1.600" />
              </svg>
            ))}
          </WinButtons>
        </TitleBar>
        <Frame>
          <MenuBar>
            {menus.map(([m, w]) => <MenuItem key={m} $w={w}>{m}</MenuItem>)}
          </MenuBar>
          <Work>
            <Main>
              <Upper>
                <LeftCol>
                  <ListPanel>
                    <HeadRow>
                      <HeadCell $w="128px" $pad={7}>Selection</HeadCell>
                      <HeadCell $w="125px" $pad={5}>
                        <svg width="24" height="20" viewBox="0 0 24 20" fill="none">
                          <rect x="0" y="5.500" width="25" height="8.500" rx="4.200" stroke="#35d6c4" strokeWidth="2.200" transform="rotate(-37 12 10)" />
                        </svg>
                        Owner
                      </HeadCell>
                    </HeadRow>
                  </ListPanel>
                  <Prompt>
                    <PromptTitle>Add Mechanism</PromptTitle>
                    <PromptHint>Click a Plane to add a Mechanism-Editor</PromptHint>
                    <PickBox>
                      <Planes w={28} h={28} />
                      <PickField>
                        <PickLabel>Select a Plane</PickLabel>
                        <PickInput>Front</PickInput>
                      </PickField>
                      <Check w={17} h={26} />
                    </PickBox>
                    <Actions>
                      <ActionButton><svg width="20" height="22" viewBox="0 0 20 22" fill="none"><path d="M3.500 11.500L8 17L15 3" stroke="#c4f5a4" strokeWidth="2.800" /></svg></ActionButton>
                      <ActionButton><svg width="20" height="22" viewBox="0 0 20 22" fill="none"><path d="M5 6L15.500 17M15.500 6L5 17" stroke="#f0902c" strokeWidth="3.200" /></svg></ActionButton>
                      <ActionButton><svg width="20" height="22" viewBox="0 0 20 22" fill="none"><path d="M2.500 1.500h10l6 6v12.500h-16zM12.500 1.500v6h6" stroke="#2fd8c8" strokeWidth="1.500" /></svg></ActionButton>
                    </Actions>
                  </Prompt>
                  <Tabs>
                    <Tab $w={98} $pad={21} $on>Assembly</Tab>
                    <Tab $w={101} $pad={19}>Kinematics</Tab>
                  </Tabs>
                  <TreeBox>
                    <Tree>
                      <TreeRoot>
                        <svg width="9" height="9" viewBox="0 0 9 9"><rect width="9" height="9" fill="#e8e8f0" /><path d="M2 4.500h5" stroke="#334" /></svg>
                        <ModelGlyph w={23} h={20} />
                        Model
                      </TreeRoot>
                      <TreeKids>
                        {["Front", "Top", "Right"].map((n) => (
                          <TreeRow key={n}><Planes w={21} h={19} />{n}</TreeRow>
                        ))}
                      </TreeKids>
                    </Tree>
                  </TreeBox>
                </LeftCol>
                <Center>
                  <ToolRow $h={50}>
                    {quick.map((q, i) => <Tools key={i} n={1} items={[[q]]} />)}
                    <Tools n={8} items={display} lead={1} slack={1} />
                    <Tools n={12} items={edit} />
                  </ToolRow>
                  <Stage>
                    <SideTools>
                      <ToolButton>
                        <Ico>
                          <F c={C.lime} d="M4 4h32v3H4zM8 7.500h10.500v10H8zM6 18h10v10H6zM24.500 7.500l5.500 5.500-5.500 5.500-5-5.500zM19 18.500h9v9h-9zM19 36l5-4 5 4z" />
                          <Plus x={30} y={28} c={C.bar} />
                        </Ico>
                      </ToolButton>
                      <ToolButton $on><Ico><Mechanism /></Ico></ToolButton>
                      <ToolButton>
                        <Ico>
                          <F d="M5 13L17.500 4.500V21L5 30zM18.500 13L31.500 4.500V21L18.500 30z" />
                          <Plus x={30} y={29.5} />
                        </Ico>
                      </ToolButton>
                    </SideTools>
                    <ViewCol>
                      <ModelTab><TabGlyph />Model</ModelTab>
                      <ViewFrame><Viewport><Scene /></Viewport></ViewFrame>
                    </ViewCol>
                  </Stage>
                  <ToolRow $h={89}>
                    <Tools n={1} items={[[<><Bar /><Bulb x={19} y={14.5} s={1.85} c={C.grey} /><Next /></>]]} />
                    <Tools n={1} items={[[<><F c="#b3b1b3" d="M8 7h18v12l-5.500 6v10l-6.500-4.500v-6L8 19z" /><F c={C.pale} d="M30.500 14l5 5-5 5z" /></>, true]]} />
                    <ToolGroup $n={8} $rows={2} $slack={2}>
                      {view.map((v, i) => <ToolButton key={i}><Ico>{v}</Ico></ToolButton>)}
                      {["front", "back", "right", "left", "top", "bottom"].map((f) => (
                        <ToolButton key={f}><CubeFace face={f} /></ToolButton>
                      ))}
                    </ToolGroup>
                  </ToolRow>
                </Center>
              </Upper>
              <Messages>
                <MsgIcon><Ico w={38} h={36} vb="4 5 38 36"><Mechanism /></Ico></MsgIcon>
                <MsgBox>
                  <div>Add Mechanism</div>
                  <div>Click a Plane to add a Mechanism-Editor</div>
                </MsgBox>
                <LogTable>
                  <LogHead>
                    <HeadCell $size={11.6} $w="63px">Count</HeadCell>
                    <HeadCell $size={11.6} $w="198px">Topic</HeadCell>
                    <HeadCell $size={11.6} $w="464px">Message</HeadCell>
                    <HeadCell $size={11.6} $w="72px">Time</HeadCell>
                    <HeadCell $size={11.6} $w="475px" />
                  </LogHead>
                </LogTable>
              </Messages>
              <Timeline>
                <Revs>
                  Revs
                  <RevsField>0</RevsField>
                </Revs>
                <Ruler />
              </Timeline>
            </Main>
            <Dock>
              {dock.map((g, gi) => (
                <DockGroup key={gi} $w={g.w}>
                  <Grip />
                  <DockGrid $cols={g.cols}>
                    {g.items.map(([icon, on], i) => (
                      <DockButton key={i} $on={on}><Ico w={32} h={32}>{icon}</Ico></DockButton>
                    ))}
                  </DockGrid>
                </DockGroup>
              ))}
              <MotionTab>Motion0</MotionTab>
              <Charts />
              <DockFoot><DockField /></DockFoot>
            </Dock>
          </Work>
        </Frame>
      </Window>
      <Caption>Select the <b>Plane</b> in the graphic-area or the<br /><b>Assembly-Tree</b></Caption>
    </Screen>
  );
}
